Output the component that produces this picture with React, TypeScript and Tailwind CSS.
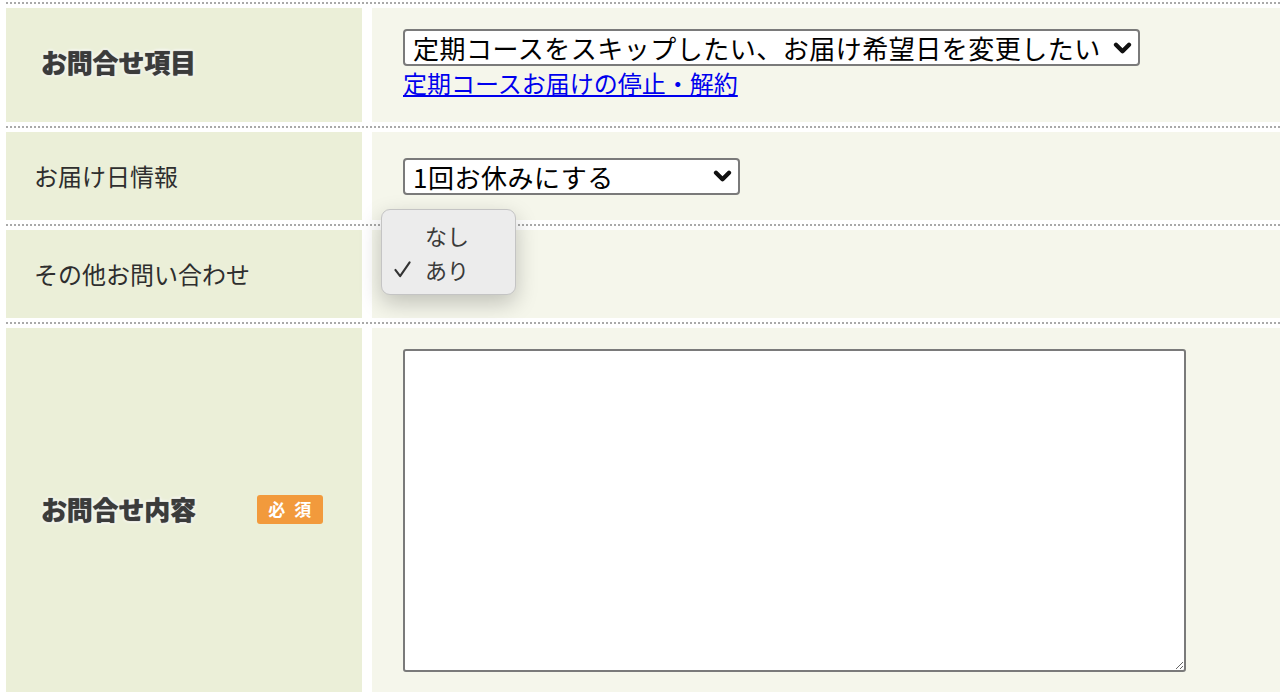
import React from 'react';

const font = { fontFamily: '"Noto Sans CJK JP", "Noto Sans", sans-serif' };

function Chevron() {
  return (
    <svg
      viewBox="0 0 20 14"
      className="pointer-events-none absolute right-[8px] top-1/2 h-[13px] w-[19px] -translate-y-1/2"
    >
      <path d="M3 3.5 L10 10.5 L17 3.5" fill="none" stroke="#111" strokeWidth="4.6" strokeLinecap="round" strokeLinejoin="round" />
    </svg>
  );
}

function Select({ value, width }: { value: string; width: string }) {
  return (
    <div className={`relative ${width}`}>
      <select
        defaultValue={value}
        className="h-[37px] w-full appearance-none rounded-[4px] border-2 border-[#7a7a7a] bg-white pl-[8px] text-[26px] leading-[33px] tracking-[0.5px] text-black"
        style={font}
      >
        <option>{value}</option>
      </select>
      <Chevron />
    </div>
  );
}

function GlowLabel({ text }: { text: string }) {
  return (
    <span
      className="text-[26px] leading-[30px] font-black tracking-[-0.2px] text-[#3b3b3b]"
      style={{ textShadow: '0 0 1px #555, 0 0 3px #fff, 0 0 3px #fff, 0 0 4px #fff' }}
    >
      {text}
    </span>
  );
}

export default function App() {
  return (
    <div className="relative w-[1280px] overflow-hidden bg-white pl-[6px] pt-[2px]" style={font}>
      {/* お問合せ項目 */}
      <div className="flex border-t-2 border-dotted border-[#a9a9a9] py-[4px]">
        <div className="flex h-[114px] w-[356px] items-center bg-[#ebefd8] pb-[6px] pl-[35px]">
          <GlowLabel text="お問合せ項目" />
        </div>
        <div className="ml-[10px] flex-1 bg-[#f5f6eb] pl-[31px] pt-[21px]">
          <Select value="定期コースをスキップしたい、お届け希望日を変更したい" width="w-[737px]" />
          <a href="#" className="mt-[2px] block text-[24px] leading-[30px] text-[#0000ee] underline">
            定期コースお届けの停止・解約
          </a>
        </div>
      </div>

      {/* お届け日情報 */}
      <div className="flex border-t-2 border-dotted border-[#a9a9a9] py-[4px]">
        <div className="flex h-[88px] w-[356px] items-center bg-[#ebefd8] pl-[28px] text-[24px] text-[#2e2e2e]">
          お届け日情報
        </div>
        <div className="ml-[10px] flex flex-1 items-center bg-[#f5f6eb] pl-[31px]">
          <Select value="1回お休みにする" width="w-[337px]" />
        </div>
      </div>

      {/* その他お問い合わせ */}
      <div className="flex border-t-2 border-dotted border-[#a9a9a9] py-[4px]">
        <div className="flex h-[88px] w-[356px] items-center bg-[#ebefd8] pl-[28px] text-[24px] text-[#2e2e2e]">
          その他お問い合わせ
        </div>
        <div className="ml-[10px] flex-1 bg-[#f5f6eb]" />
      </div>

      {/* お問合せ内容 */}
      <div className="flex border-t-2 border-dotted border-[#a9a9a9] py-[4px]">
        <div className="flex h-[364px] w-[356px] items-center bg-[#ebefd8] pb-[2px] pl-[35px]">
          <GlowLabel text="お問合せ内容" />
          <span className="ml-[61px] flex h-[29px] w-[66px] items-center justify-center gap-[9px] rounded-[3px] bg-[#f29a3c] text-[17px] font-bold text-white">
            <span>必</span>
            <span>須</span>
          </span>
        </div>
        <div className="ml-[10px] flex-1 bg-[#f5f6eb] pl-[31px] pt-[21px]">
          <textarea className="block h-[323px] w-[783px] resize rounded-[3px] border-2 border-[#7a7a7a] bg-white" />
        </div>
      </div>

      {/* native popup menu for その他お問い合わせ */}
      <div className="absolute left-[381px] top-[209px] w-[135px] rounded-[9px] border border-[#c4c4c4] bg-[#ececec] py-[8px] text-[22px] text-[#3a3a3a] shadow-[0_8px_22px_rgba(0,0,0,0.22)]">
        <div className="flex h-[34px] items-center pl-[43px]">なし</div>
        <div className="relative flex h-[34px] items-center pl-[43px]">
          <svg viewBox="0 0 20 20" className="absolute left-[11px] top-[8px] h-[19px] w-[19px]">
            <path d="M2.5 10.5 L7.5 17 L17.5 2.5" fill="none" stroke="#333" strokeWidth="2.2" strokeLinecap="round" strokeLinejoin="round" />
          </svg>
          あり
        </div>
      </div>
    </div>
  );
}
